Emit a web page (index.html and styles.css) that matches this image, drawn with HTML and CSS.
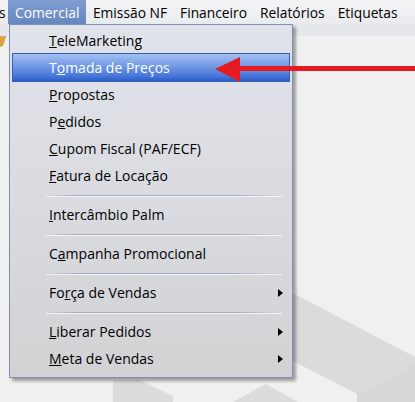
FILE: index.html
```html
<!DOCTYPE html>
<html lang="pt-BR">
<head>
    <meta charset="UTF-8">
    <meta name="viewport" content="width=device-width, initial-scale=1.0">
    <title>Comercial</title>
    <link rel="stylesheet" href="styles.css">
</head>
<body>
    <!-- faded shapes of the desktop wallpaper behind the menu -->
    <svg class="backdrop" width="415" height="402" viewBox="0 0 415 402">
        <polygon points="260,276 415,357 415,364 357,394 260,344" fill="#dbdbdb"/>
        <polygon points="357,394 415,364 415,402 357,402" fill="#d7d7d7"/>
        <polygon points="113,380 140,380 173,396 173,402 113,402" fill="#dcdcdc"/>
        <polygon points="233,402 266,384 298,402" fill="#dcdcdc"/>
        <polygon points="0,30 6,27 8,31 3,46 0,47" fill="#d8a445"/>
    </svg>

    <div class="menubar">
        <span class="menubar-item cut">s</span>
        <span class="menubar-item active">Comercial</span>
        <span class="menubar-item">Emissão NF</span>
        <span class="menubar-item">Financeiro</span>
        <span class="menubar-item">Relatórios</span>
        <span class="menubar-item">Etiquetas</span>
    </div>
    <div class="toolbar"></div>

    <div class="dropdown">
        <div class="menu-item"><u>T</u>eleMarketing</div>
        <div class="menu-item selected">T<u>o</u>mada de Preços</div>
        <div class="menu-item"><u>P</u>ropostas</div>
        <div class="menu-item">P<u>e</u>didos</div>
        <div class="menu-item"><u>C</u>upom Fiscal (PAF/ECF)</div>
        <div class="menu-item"><u>F</u>atura de Locação</div>
        <div class="separator"></div>
        <div class="menu-item"><u>I</u>ntercâmbio Palm</div>
        <div class="separator"></div>
        <div class="menu-item">C<u>a</u>mpanha Promocional</div>
        <div class="separator"></div>
        <div class="menu-item has-sub">Fo<u>r</u>ça de Vendas<span class="sub-arrow"></span></div>
        <div class="separator"></div>
        <div class="menu-item has-sub"><u>L</u>iberar Pedidos<span class="sub-arrow"></span></div>
        <div class="menu-item has-sub"><u>M</u>eta de Vendas<span class="sub-arrow"></span></div>
    </div>

    <!-- red pointer drawn over the screenshot -->
    <svg class="pointer" width="200" height="30" viewBox="0 0 200 30">
        <rect x="22" y="9" width="178" height="5" fill="#e61b22"/>
        <polygon points="0,12 25,0 25,25" fill="#e61b22"/>
    </svg>
</body>
</html>
```

FILE: styles.css
```css
body {
    margin: 0;
    padding: 0;
    width: 415px;
    height: 402px;
    overflow: hidden;
    position: relative;
    background-color: #f0f0f0;
    font-family: "Open Sans", "Noto Sans", sans-serif;
    color: #000;
}
.backdrop {
    position: absolute;
    left: 0;
    top: 0;
}
.menubar {
    position: relative;
    display: flex;
    height: 24px;
    align-items: stretch;
    background: linear-gradient(to bottom, #f4f4f6, #eaebee);
    font-size: 13.8px;
}
.menubar-item {
    display: flex;
    align-items: center;
    padding: 0 6.5px;
    white-space: nowrap;
}
.menubar-item.cut {
    width: 9px;
    padding: 0;
    margin-left: -1px;
}
.menubar-item.active {
    padding: 0 7px;
    background: linear-gradient(to bottom, #7f9dd0, #6687bf);
    color: #fff;
}
.toolbar {
    position: relative;
    height: 12px;
    background-color: #e6e7ea;
}
.dropdown {
    position: absolute;
    left: 9px;
    top: 24px;
    width: 284px;
    box-sizing: border-box;
    padding: 2px 2px 5px 2px;
    border: 1px solid #7d8fb8;
    background: linear-gradient(to bottom, #e0e3ea, #d9dbe0 50%, #d2d2d4);
    box-shadow: 3px 3px 3px rgba(0, 0, 0, 0.35);
    font-size: 14px;
}
.menu-item {
    display: flex;
    align-items: center;
    height: 27px;
    box-sizing: border-box;
    padding-left: 37px;
    white-space: nowrap;
}
.menu-item.selected {
    color: #fff;
    height: 29px;
    margin: -1px 0;
    border: 1px solid #3560b8;
    padding-left: 36px;
    background: linear-gradient(to bottom, #a2c0f2, #7299e3 45%, #4a78da 80%, #2c5ec9);
}
.sub-arrow {
    margin-left: auto;
    margin-right: 7px;
    width: 0;
    height: 0;
    border-left: 5px solid #000;
    border-top: 4px solid transparent;
    border-bottom: 4px solid transparent;
}
.separator {
    height: 12px;
    display: flex;
    align-items: center;
    padding-left: 34px;
}
.separator::before {
    content: "";
    flex: 1;
    height: 1px;
    margin-right: 8px;
    background: linear-gradient(to right, rgba(160, 172, 196, 0), #a3aec6 12%, #a3aec6 80%, rgba(160, 172, 196, 0));
    box-shadow: 0 1px 0 rgba(255, 255, 255, 0.7);
}
.pointer {
    position: absolute;
    left: 215px;
    top: 57px;
}
```
